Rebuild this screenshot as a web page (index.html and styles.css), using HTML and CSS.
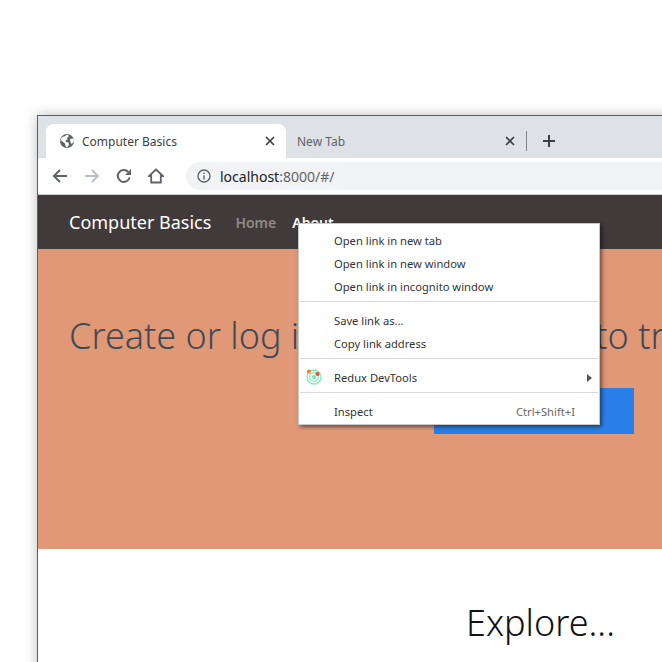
FILE: index.html
```html
<!DOCTYPE html>
<html lang="en">
<head>
    <meta charset="UTF-8">
    <meta name="viewport" content="width=device-width, initial-scale=1.0">
    <title>Computer Basics</title>
    <link rel="stylesheet" href="styles.css">
</head>
<body>
    <div class="window">
        <div class="tabstrip">
            <div class="tab active">
                <svg class="favicon" width="16" height="16" viewBox="0 0 16 16">
                    <circle cx="8" cy="8" r="7" fill="#5f6368"/>
                    <path d="M2.5 4.5 L6 3 L8.5 1.5 L10 3 L8 5 L8.5 6.5 L6.5 7.5 L7 9 L9.5 9.5 L10 12 L8 14.5 L6.5 13 L6 10.5 L3.5 8.5 L1.5 7.5 Z" fill="#fff"/>
                    <path d="M11 6 L14.5 5.5 L14.8 9 L12.5 11 L11.5 9 Z" fill="#fff"/>
                </svg>
                <span class="tab-title">Computer Basics</span>
                <svg class="tab-close" width="10" height="10" viewBox="0 0 10 10"><path d="M1 1 L9 9 M9 1 L1 9" stroke="#3c4043" stroke-width="1.7" fill="none"/></svg>
            </div>
            <div class="tab">
                <span class="tab-title">New Tab</span>
                <svg class="tab-close" width="10" height="10" viewBox="0 0 10 10"><path d="M1 1 L9 9 M9 1 L1 9" stroke="#3c4043" stroke-width="1.7" fill="none"/></svg>
            </div>
            <div class="tab-divider"></div>
            <svg class="new-tab" width="12" height="12" viewBox="0 0 12 12"><path d="M6 0 V12 M0 6 H12" stroke="#3c4043" stroke-width="2" fill="none"/></svg>
        </div>
        <div class="toolbar">
            <svg class="nav-icon" width="16" height="16" viewBox="0 0 16 16"><path d="M15 8 H2 M8 2 L2 8 L8 14" stroke="#5f6368" stroke-width="2" fill="none"/></svg>
            <svg class="nav-icon" width="16" height="16" viewBox="0 0 16 16"><path d="M1 8 H14 M8 2 L14 8 L8 14" stroke="#bdc1c6" stroke-width="2" fill="none"/></svg>
            <svg class="nav-icon" width="16" height="16" viewBox="0 0 16 16"><path d="M13.6 9.5 A6 6 0 1 1 12.2 3.8" stroke="#5f6368" stroke-width="2" fill="none"/><path d="M15 1 V7 H9 Z" fill="#5f6368"/></svg>
            <svg class="nav-icon" width="16" height="16" viewBox="0 0 16 16"><path d="M8 1.5 L15 8 H12.8 V14.5 H3.2 V8 H1 Z" stroke="#5f6368" stroke-width="1.8" fill="none" stroke-linejoin="miter"/><path d="M6.5 14.5 V10 H9.5 V14.5" stroke="none" fill="none"/></svg>
            <div class="omnibox">
                <svg width="14" height="14" viewBox="0 0 14 14"><circle cx="7" cy="7" r="6" stroke="#5f6368" stroke-width="1.4" fill="none"/><path d="M7 6.2 V10.4 M7 3.6 V5" stroke="#5f6368" stroke-width="1.4"/></svg>
                <span class="url">localhost<span class="url-rest">:8000/#/</span></span>
            </div>
        </div>
        <nav class="navbar">
            <span class="brand">Computer Basics</span>
            <span class="nav-link">Home</span>
            <span class="nav-link current">About</span>
        </nav>
        <section class="hero">
            <h1>Create or log in to your account to track a</h1>
            <div class="hero-action"><button class="login-btn">Create or Log In</button></div>
        </section>
        <section class="explore">
            <h2>Explore...</h2>
        </section>
    </div>

    <div class="context-menu">
        <div class="menu-item">Open link in new tab</div>
        <div class="menu-item">Open link in new window</div>
        <div class="menu-item">Open link in incognito window</div>
        <div class="menu-sep"></div>
        <div class="menu-item">Save link as...</div>
        <div class="menu-item">Copy link address</div>
        <div class="menu-sep"></div>
        <div class="menu-item">
            <svg class="menu-icon" width="16" height="16" viewBox="0 0 16 16">
                <circle cx="8" cy="8" r="7" stroke="#7df0b8" stroke-width="1.3" fill="#fff"/>
                <circle cx="8" cy="8" r="4.3" stroke="#7df0b8" stroke-width="1.2" fill="none"/>
                <circle cx="8" cy="8" r="2" fill="#6fe8a8"/>
                <circle cx="3" cy="2.5" r="2" fill="#f0793a"/>
                <circle cx="11.5" cy="5" r="2" fill="#ea4b35"/>
            </svg>
            Redux DevTools
            <span class="submenu-arrow"></span>
        </div>
        <div class="menu-sep"></div>
        <div class="menu-item">Inspect<span class="shortcut">Ctrl+Shift+I</span></div>
    </div>
</body>
</html>
```

FILE: styles.css
```css
html, body {
    margin: 0;
    height: 662px;
    overflow: hidden;
    background: white;
}
body {
    position: relative;
    font-family: "Noto Sans", sans-serif;
}
.window {
    margin: 115px 0 0 37px;
    width: 660px;
    height: 600px;
    border: 1px solid #5f5f5f;
    box-sizing: border-box;
    background: white;
    box-shadow: 0 0 12px rgba(0, 0, 0, 0.25);
}
.tabstrip {
    display: flex;
    align-items: flex-end;
    height: 42px;
    padding-left: 8px;
    background-color: #dee1e6;
}
.tab {
    display: flex;
    align-items: center;
    box-sizing: border-box;
    width: 240px;
    height: 34px;
    padding: 0 11px;
    flex-shrink: 0;
}
.tab.active {
    background: white;
    border-radius: 8px 8px 0 0;
    padding-left: 13px;
}
.favicon {
    margin-right: 7px;
}
.tab-title {
    flex: 1;
    font-size: 12px;
    color: #3c4043;
}
.tab:not(.active) .tab-title {
    color: #5f6368;
}
.tab-close {
    margin-right: 0;
}
.tab-divider {
    width: 1px;
    height: 20px;
    margin: 0 0 7px 0;
    background: #80868b;
}
.new-tab {
    margin: 0 0 11px 16px;
}
.toolbar {
    display: flex;
    align-items: center;
    height: 36px;
    padding-left: 14px;
    gap: 16px;
    border-bottom: 1px solid #cfcfcf;
    box-sizing: content-box;
}
.omnibox {
    display: flex;
    align-items: center;
    gap: 9px;
    flex: 1;
    height: 28px;
    margin-left: 6px;
    padding-left: 11px;
    border-radius: 14px 0 0 14px;
    background-color: #f1f3f4;
}
.url {
    font-size: 14px;
    color: #202124;
}
.url-rest {
    color: #5f6368;
}
.navbar {
    display: flex;
    align-items: center;
    height: 54px;
    padding-left: 31px;
    background-color: #403a3a;
}
.brand {
    font-size: 18px;
    color: white;
    margin-right: 24px;
}
.nav-link {
    font-size: 14px;
    font-weight: 600;
    color: #8f8b8b;
    margin-right: 16px;
}
.nav-link.current {
    color: white;
}
.hero {
    height: 300px;
    overflow: hidden;
    background-color: #e19877;
}
.hero h1 {
    margin: 63px 0 0 31px;
    font-size: 36px;
    font-weight: 300;
    line-height: 48px;
    white-space: nowrap;
    color: #3f4a55;
}
.hero-action {
    margin: 28px 0 0 396px;
}
.login-btn {
    display: block;
    width: 200px;
    height: 46px;
    border: 0;
    background-color: #2a80e8;
    color: white;
    font-family: inherit;
    font-size: 16px;
    font-weight: 500;
}
.explore {
    padding: 50px 0 0 428px;
}
.explore h2 {
    margin: 0;
    font-size: 36px;
    font-weight: 300;
    line-height: 48px;
    color: #111;
}
.context-menu {
    position: absolute;
    left: 298px;
    top: 223px;
    width: 302px;
    height: 202px;
    box-sizing: border-box;
    padding-top: 5px;
    border: 1px solid #c8c8c8;
    background: white;
    box-shadow: 2px 2px 4px rgba(0, 0, 0, 0.5);
    font-size: 11.2px;
    color: #333;
}
.menu-item {
    position: relative;
    height: 23px;
    line-height: 23px;
    padding-left: 35px;
}
.menu-sep {
    height: 1px;
    margin: 3px 1px 7px 1px;
    background: #d9d9d9;
}
.menu-icon {
    position: absolute;
    left: 7px;
    top: 3px;
}
.submenu-arrow {
    position: absolute;
    right: 7px;
    top: 8px;
    border-left: 5px solid #555;
    border-top: 4px solid transparent;
    border-bottom: 4px solid transparent;
}
.shortcut {
    position: absolute;
    right: 24px;
    color: #666;
}
```
